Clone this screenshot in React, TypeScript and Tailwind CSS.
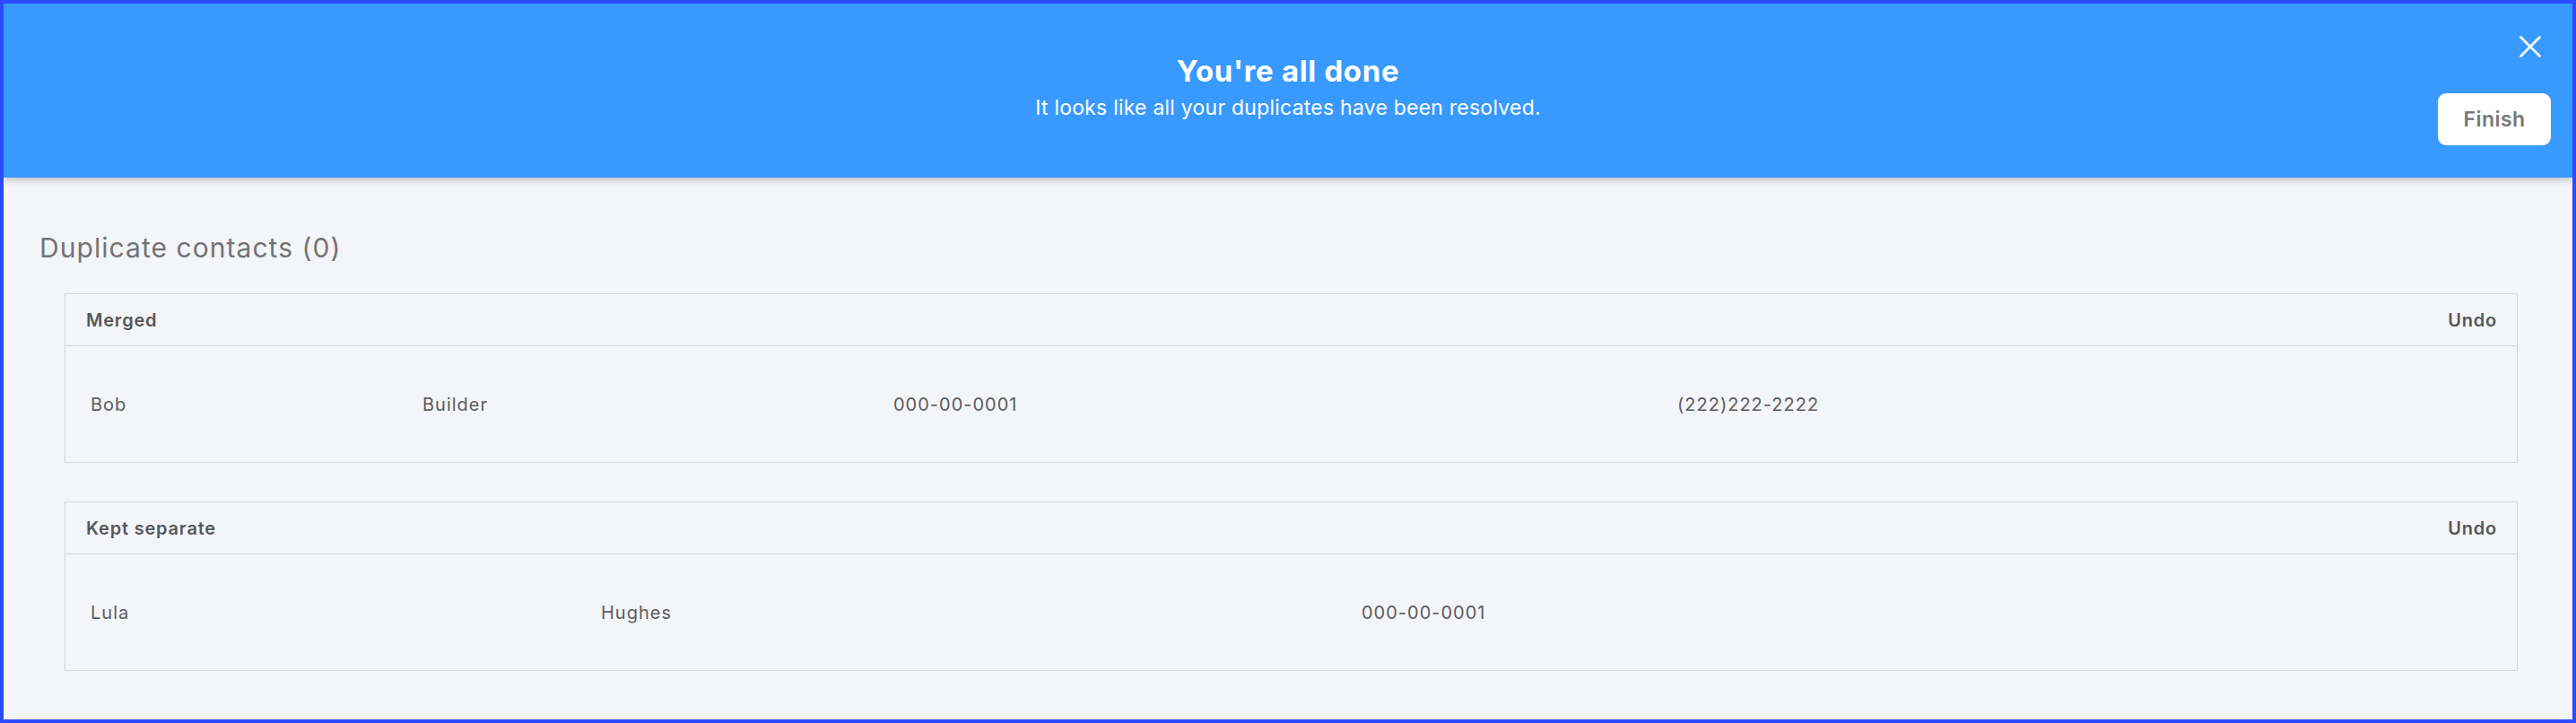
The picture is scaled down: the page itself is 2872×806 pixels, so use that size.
import React from 'react';

interface Row {
  cells: string[];
}

interface GroupProps {
  title: string;
  cols: string;
  row: Row;
}

const Group: React.FC<GroupProps> = ({ title, cols, row }) => {
  return (
    <div className="border border-[#d5d6da]">
      <div className="flex h-[58px] items-center justify-between border-b border-[#d5d6da] pl-[23px] pr-[22px] text-[20px] font-semibold tracking-[0.04em] text-[#575757]">
        <span>{title}</span>
        <button className="font-semibold tracking-[0.04em] text-[#575757]">Undo</button>
      </div>
      <div className={`grid h-[129px] items-center pl-[28px] text-[20px] tracking-[0.05em] text-[#5c5c5c] ${cols}`}>
        {row.cells.map((c, i) => (
          <span key={i}>{c}</span>
        ))}
      </div>
    </div>
  );
};

export default function App() {
  return (
    <div
      className="flex h-[806px] w-full flex-col overflow-hidden border-4 border-[#2c4afc] bg-[#f4f5f9]"
      style={{ fontFamily: 'Inter, "Noto Sans", sans-serif' }}
    >
      <header className="relative z-10 flex h-[194px] shrink-0 flex-col items-center bg-[#3899fe] pt-[55px] text-white shadow-[0_3px_8px_rgba(0,0,0,0.22)]">
        <h1 className="text-[33px] font-bold leading-[40px] tracking-[0.02em]">You're all done</h1>
        <p className="mt-[7px] text-[23px] leading-[28px] tracking-[0.01em]">It looks like all your duplicates have been resolved.</p>
        <button className="absolute right-[35px] top-[36px] h-[24px] w-[24px]" aria-label="Close">
          <svg viewBox="0 0 24 24" className="h-[24px] w-[24px]" fill="none" stroke="white" strokeWidth="2.6" strokeLinecap="round">
            <path d="M1.5 1.5 22.5 22.5M22.5 1.5 1.5 22.5" />
          </svg>
        </button>
        <button className="absolute right-[24px] top-[100px] h-[58px] w-[126px] rounded-[9px] bg-white text-[23px] font-semibold tracking-[0.02em] text-[#787878]">
          Finish
        </button>
      </header>

      <main className="flex-1">
        <h2 className="mt-[60px] pl-[40px] text-[30px] leading-[36px] tracking-[0.035em] text-[#737373]">Duplicate contacts (0)</h2>
        <div className="mt-[33px] flex flex-col gap-[43px] pl-[68px] pr-[61px]">
          <Group
            title="Merged"
            cols="grid-cols-[370px_525px_874px_1fr]"
            row={{ cells: ['Bob', 'Builder', '000-00-0001', '(222)222-2222'] }}
          />
          <Group
            title="Kept separate"
            cols="grid-cols-[569px_848px_1fr]"
            row={{ cells: ['Lula', 'Hughes', '000-00-0001'] }}
          />
        </div>
      </main>
    </div>
  );
}
